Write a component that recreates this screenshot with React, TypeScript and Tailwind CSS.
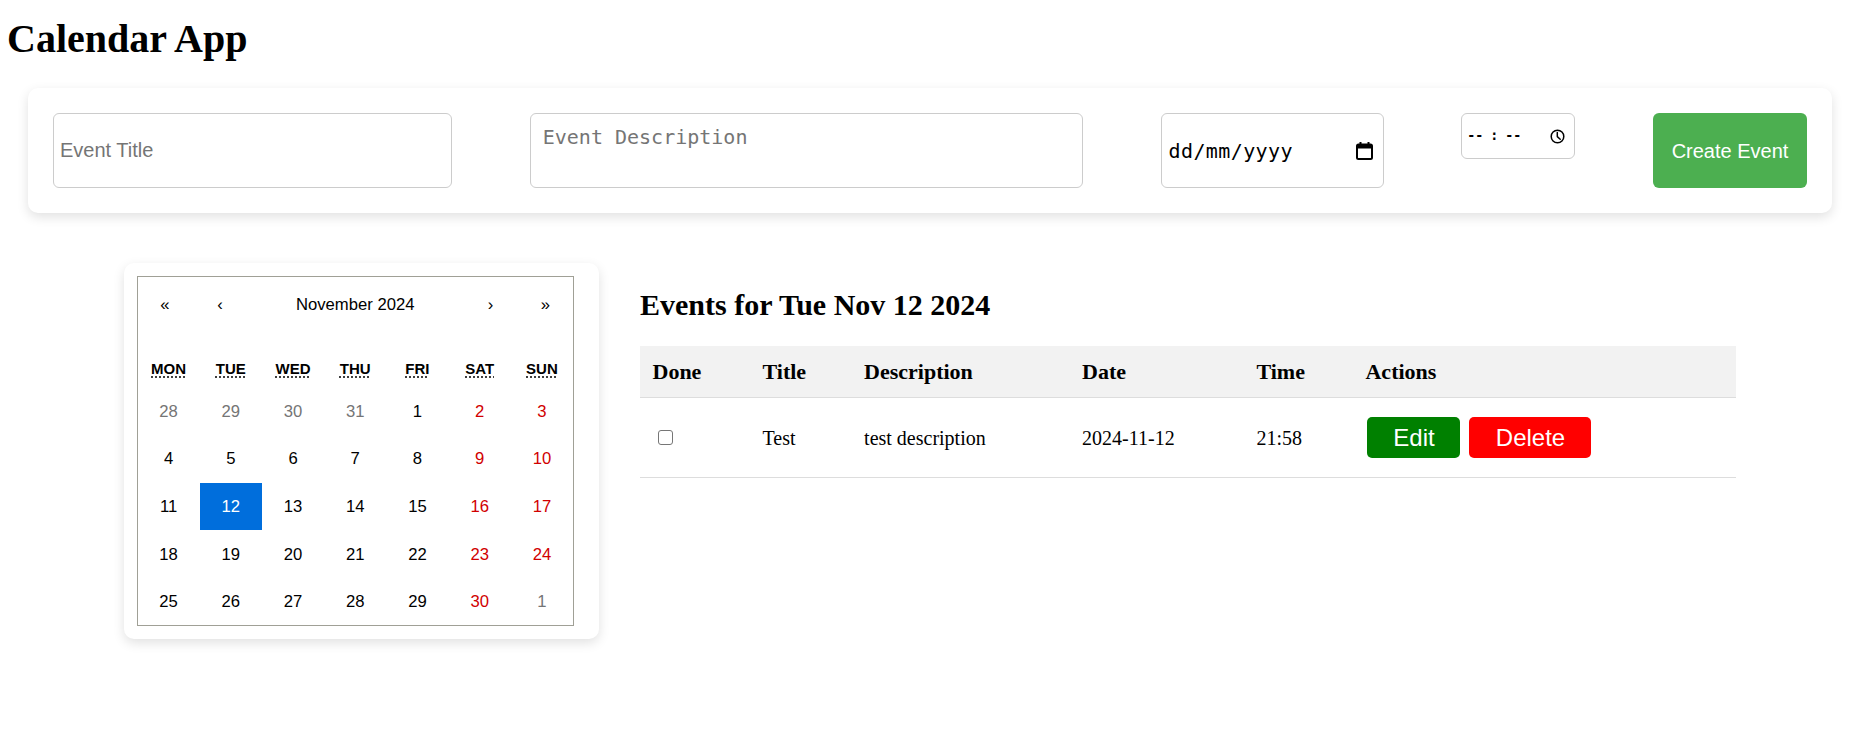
import React from "react";

const serif = "font-['Liberation_Serif','Times_New_Roman',serif]";
const sans = "font-['Liberation_Sans',Arial,sans-serif]";
const mono = "font-['DejaVu_Sans_Mono',monospace]";

type Day = { n: number; kind: "prev" | "cur" | "next" };

function buildDays(): Day[] {
  const out: Day[] = [];
  [28, 29, 30, 31].forEach((n) => out.push({ n, kind: "prev" }));
  for (let i = 1; i <= 30; i++) out.push({ n: i, kind: "cur" });
  out.push({ n: 1, kind: "next" });
  return out;
}

function CalendarIcon() {
  return (
    <svg width="17" height="18" viewBox="0 0 17 18" fill="none">
      <rect x="3.5" y="0" width="2" height="3.5" fill="#000" />
      <rect x="11.5" y="0" width="2" height="3.5" fill="#000" />
      <rect x="1" y="2.5" width="15" height="14.5" rx="1.5" stroke="#000" strokeWidth="2" />
      <rect x="1" y="2.5" width="15" height="4" fill="#000" />
    </svg>
  );
}

function ClockIcon() {
  return (
    <svg width="15" height="15" viewBox="0 0 15 15" fill="none">
      <circle cx="7.5" cy="7.5" r="6.3" stroke="#000" strokeWidth="1.5" />
      <path d="M7.3 3.6 V7.6 L10.2 10.2" stroke="#000" strokeWidth="1.5" strokeLinecap="round" strokeLinejoin="round" />
    </svg>
  );
}

function Calendar() {
  const days = buildDays();
  const weekdays = [
    ["MON", "Monday"],
    ["TUE", "Tuesday"],
    ["WED", "Wednesday"],
    ["THU", "Thursday"],
    ["FRI", "Friday"],
    ["SAT", "Saturday"],
    ["SUN", "Sunday"],
  ];
  return (
    <div className={`w-[437.5px] border border-[#a0a096] bg-white ${sans} text-black`}>
      <div className="flex h-[55px] items-center text-[16.67px]">
        <div className="w-[55px] text-center">«</div>
        <div className="w-[55px] text-center">‹</div>
        <div className="flex-1 text-center">November 2024</div>
        <div className="w-[55px] text-center">›</div>
        <div className="w-[55px] text-center">»</div>
      </div>
      <div className="mt-[20px] grid h-[36px] grid-cols-7 items-center text-center text-[15px] font-bold">
        {weekdays.map(([a, t]) => (
          <div key={a}>
            <abbr title={t} className="underline decoration-dotted underline-offset-[2px]">
              {a}
            </abbr>
          </div>
        ))}
      </div>
      <div className="grid grid-cols-7">
        {days.map((d, i) => {
          const col = i % 7;
          const weekend = col >= 5;
          const selected = d.kind === "cur" && d.n === 12;
          let cls = "text-black";
          if (d.kind !== "cur") cls = "text-[#757575]";
          else if (weekend) cls = "text-[#d10000]";
          if (selected) cls = "bg-[#006edc] text-white";
          return (
            <div
              key={i}
              className={`flex h-[47.6px] items-center justify-center text-[16.67px] ${cls}`}
            >
              {d.n}
            </div>
          );
        })}
      </div>
    </div>
  );
}

export default function App() {
  const cols = "grid grid-cols-[110px_101.6px_218px_174.4px_109px_1fr]";
  return (
    <div className="min-h-screen bg-white text-black">
      <h1 className={`${serif} pl-[7px] pt-[16px] text-[40px] font-bold leading-[46px]`}>
        Calendar App
      </h1>

      <div className="ml-[28px] mr-[25px] mt-[26px] flex h-[125px] justify-between rounded-[10px] bg-white p-[25px] shadow-[0_4px_12px_rgba(0,0,0,0.12)]">
        <input
          type="text"
          placeholder="Event Title"
          className={`${sans} h-[75px] w-[399px] rounded-[6px] border border-[#ccc] pl-[6px] text-[20px] outline-none placeholder:text-[#757575]`}
        />
        <textarea
          placeholder="Event Description"
          className={`${mono} h-[75px] w-[553px] resize-none rounded-[6px] border border-[#ccc] px-[12px] py-[12px] text-[20px] leading-[23px] outline-none placeholder:text-[#757575]`}
        />
        <div className="flex h-[75px] w-[223px] items-center justify-between rounded-[6px] border border-[#ccc] pl-[7px] pr-[10px]">
          <span className={`${mono} text-[20px] tracking-[0.4px] text-black`}>dd/mm/yyyy</span>
          <CalendarIcon />
        </div>
        <div className="flex h-[46px] w-[114px] items-center justify-between self-start rounded-[6px] border border-[#ccc] pl-[5px] pr-[9px]">
          <span className={`${mono} text-[13.33px] font-bold text-black`}>
            --<span className="mx-[7px]">:</span>--
          </span>
          <ClockIcon />
        </div>
        <button
          className={`${sans} h-[75px] w-[154px] rounded-[6px] bg-[#4caf50] text-[20px] text-white`}
        >
          Create Event
        </button>
      </div>

      <div className="mt-[50px] flex items-start gap-[41px] pl-[124px]">
        <div className="w-[475px] rounded-[10px] bg-white p-[12.5px] shadow-[0_4px_12px_rgba(0,0,0,0.12)]">
          <Calendar />
        </div>

        <div className={`${serif} w-[1096px]`}>
          <h2 className="mb-[25px] mt-[25px] text-[30px] font-bold leading-[33px]">
            Events for Tue Nov 12 2024
          </h2>
          <div className="text-[20px]">
            <div className={`${cols} h-[52px] items-center border-b border-[#ddd] bg-[#f2f2f2] text-[22px] font-bold`}>
              <div className="px-[12.5px]">Done</div>
              <div className="px-[12.5px]">Title</div>
              <div className="px-[12.5px]">Description</div>
              <div className="px-[12.5px]">Date</div>
              <div className="px-[12.5px]">Time</div>
              <div className="px-[12.5px]">Actions</div>
            </div>
            <div className={`${cols} h-[80px] items-center border-b border-[#ddd]`}>
              <div className="pl-[17.5px]">
                <span className="block h-[15px] w-[15px] rounded-[3px] border-[1.25px] border-[#767676] bg-white" />
              </div>
              <div className="px-[12.5px]">Test</div>
              <div className="px-[12.5px]">test description</div>
              <div className="px-[12.5px]">2024-11-12</div>
              <div className="px-[12.5px]">21:58</div>
              <div className="flex items-center px-[12.5px]">
                <button className={`${sans} ml-[2px] h-[41px] w-[93px] rounded-[5px] bg-[#008000] text-[24px] text-white`}>
                  Edit
                </button>
                <button className={`${sans} ml-[9px] h-[41px] w-[122px] rounded-[5px] bg-[#ff0000] text-[24px] text-white`}>
                  Delete
                </button>
              </div>
            </div>
          </div>
        </div>
      </div>
    </div>
  );
}
